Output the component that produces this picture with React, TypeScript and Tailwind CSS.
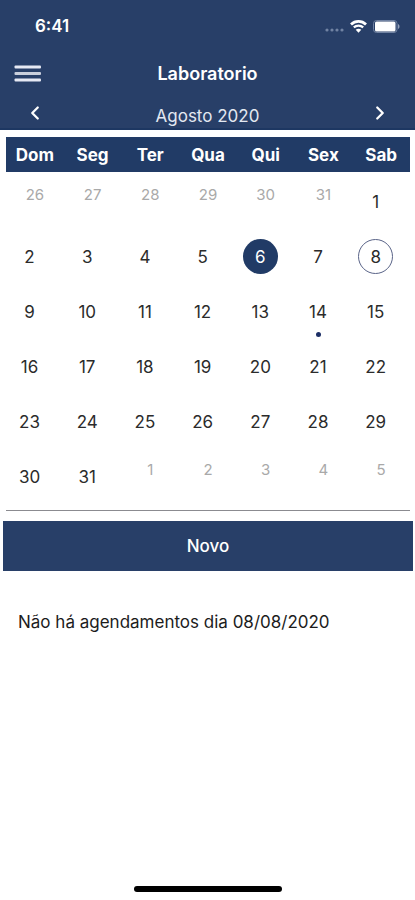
import React, { useState } from 'react';
import { ChevronLeft, ChevronRight } from 'lucide-react';

interface CalendarDay {
    key: string;
    day: number;
    inMonth: boolean;
}

const WEEKDAYS = ['Dom', 'Seg', 'Ter', 'Qua', 'Qui', 'Sex', 'Sab'];
const MONTHS = [
    'Janeiro', 'Fevereiro', 'Março', 'Abril', 'Maio', 'Junho',
    'Julho', 'Agosto', 'Setembro', 'Outubro', 'Novembro', 'Dezembro',
];

const TODAY = '2020-8-6';
const BOOKED = ['2020-8-14'];

const toKey = (d: Date) => `${d.getFullYear()}-${d.getMonth() + 1}-${d.getDate()}`;

const buildWeeks = (year: number, month: number): CalendarDay[][] => {
    const offset = new Date(year, month, 1).getDay();
    return Array.from({ length: 6 }, (_, w) =>
        Array.from({ length: 7 }, (_, d) => {
            const date = new Date(year, month, 1 - offset + w * 7 + d);
            return { key: toKey(date), day: date.getDate(), inMonth: date.getMonth() === month };
        })
    );
};

const formatDate = (key: string) => {
    const [y, m, d] = key.split('-');
    return `${d.padStart(2, '0')}/${m.padStart(2, '0')}/${y}`;
};

const StatusBar: React.FC = () => (
    <div className="flex items-center justify-between pt-4 pl-[35px] pr-[15px]">
        <span className="text-[17px] leading-5 font-semibold">6:41</span>
        <div className="flex items-center gap-[6px]">
            <svg width="20" height="12" viewBox="0 0 20 12" fill="#7183a3" aria-hidden="true">
                <circle cx="3" cy="10" r="1.6" />
                <circle cx="8" cy="10" r="1.6" />
                <circle cx="13" cy="10" r="1.6" />
                <circle cx="18" cy="10" r="1.6" />
            </svg>
            <svg width="17" height="13" viewBox="0 0 17 13" fill="none" stroke="#fff" aria-hidden="true">
                <path d="M1 4.4C5.2 0.4 11.8 0.4 16 4.4" strokeWidth="2.8" />
                <path d="M3.8 7.4C6.4 4.9 10.6 4.9 13.2 7.4" strokeWidth="2.2" />
                <path d="M8.5 12.8L5.7 9.8C7.4 8.4 9.6 8.4 11.3 9.8Z" fill="#fff" stroke="none" />
            </svg>
            <svg width="27" height="13" viewBox="0 0 27 13" aria-hidden="true">
                <rect x="0.5" y="0.5" width="23.5" height="12" rx="3" fill="none" stroke="#7183a3" />
                <rect x="2" y="1.5" width="20.5" height="10" rx="1.5" fill="#fff" />
                <path d="M25 4C27 4.7 27 8.3 25 9Z" fill="#93a1ba" />
            </svg>
        </div>
    </div>
);

const App: React.FC = () => {
    const [current, setCurrent] = useState({ year: 2020, month: 7 });
    const [selected, setSelected] = useState('2020-8-8');

    const changeMonth = (step: number) => {
        const next = new Date(current.year, current.month + step, 1);
        setCurrent({ year: next.getFullYear(), month: next.getMonth() });
    };

    const dayClass = (key: string) => {
        if (key === TODAY) return 'bg-[#213b66] text-white';
        if (key === selected) return 'border border-[#5a6488] text-[#2b2b2b]';
        return 'text-[#2b2b2b]';
    };

    return (
        <div className="min-h-screen bg-white flex flex-col font-['Inter',sans-serif]">
            <header className="bg-[#283f68] text-white border-b-2 border-[#1d3762]">
                <StatusBar />
                <div className="grid grid-cols-[1fr_auto_1fr] items-center h-[60px] px-[14px] mt-2">
                    <button aria-label="Menu" className="justify-self-start">
                        <svg width="28" height="18" viewBox="0 0 28 18" fill="#e6e9f4" aria-hidden="true">
                            <rect x="0.5" y="0.5" width="26.5" height="3" rx="1" />
                            <rect x="0.5" y="7" width="26.5" height="3" rx="1" fill="#c9cfdc" />
                            <rect x="0.5" y="13.5" width="26.5" height="3" rx="1" />
                        </svg>
                    </button>
                    <h1 className="text-[18px] leading-6 font-semibold">Laboratorio</h1>
                </div>
                <div className="flex items-center justify-between h-[24px] px-6">
                    <button aria-label="Mês anterior" onClick={() => changeMonth(-1)}>
                        <ChevronLeft className="w-[22px] h-[22px] mb-1.5" strokeWidth={2.5} />
                    </button>
                    <span className="text-[17px] leading-6 text-[#e3e8f1]">
                        {MONTHS[current.month]} {current.year}
                    </span>
                    <button aria-label="Próximo mês" onClick={() => changeMonth(1)}>
                        <ChevronRight className="w-[22px] h-[22px] mb-1.5" strokeWidth={2.5} />
                    </button>
                </div>
            </header>

            <main className="flex-1 pt-[7px]">
                <div className="ml-[6px] mr-[5px] pb-2 border-b border-[#8b8b90]">
                    <table className="w-full table-fixed border-collapse">
                        <thead>
                            <tr className="h-[35px] bg-[#213b66] text-white">
                                {WEEKDAYS.map((name) => (
                                    <th key={name} scope="col" className="p-0 text-[17px] leading-6 font-bold">
                                        {name}
                                    </th>
                                ))}
                            </tr>
                        </thead>
                        <tbody>
                            {buildWeeks(current.year, current.month).map((week) => (
                                <tr key={week[0].key} className="h-[55px]">
                                    {week.map(({ key, day, inMonth }) => (
                                        <td key={key} className="p-0 pt-3 align-top text-center">
                                            {inMonth ? (
                                                <div className="w-[35px] ml-[6px] flex flex-col items-center">
                                                    <button
                                                        onClick={() => setSelected(key)}
                                                        className={`w-[35px] h-[35px] rounded-full text-[17px] leading-6 ${dayClass(key)}`}
                                                    >
                                                        {day}
                                                    </button>
                                                    {BOOKED.includes(key) && (
                                                        <span className="w-[5px] h-[5px] mt-[3px] rounded-full bg-[#1c2f66]" />
                                                    )}
                                                </div>
                                            ) : (
                                                <span className="block text-[15px] leading-[22px] text-[#a9a9a9]">{day}</span>
                                            )}
                                        </td>
                                    ))}
                                </tr>
                            ))}
                        </tbody>
                    </table>
                </div>

                <div className="pl-[3px] pr-[2px] mt-[10px]">
                    <button className="w-full h-[50px] bg-[#283f68] text-white text-[17px] leading-6 font-medium">
                        Novo
                    </button>
                </div>

                <p className="mt-[39px] px-[18px] text-[17px] leading-6 text-[#1c1c1c]">
                    Não há agendamentos dia {formatDate(selected)}
                </p>
            </main>

            <footer className="flex justify-center pb-2">
                <div className="w-[148px] h-[6px] rounded-full bg-black" />
            </footer>
        </div>
    );
};

export default App;
